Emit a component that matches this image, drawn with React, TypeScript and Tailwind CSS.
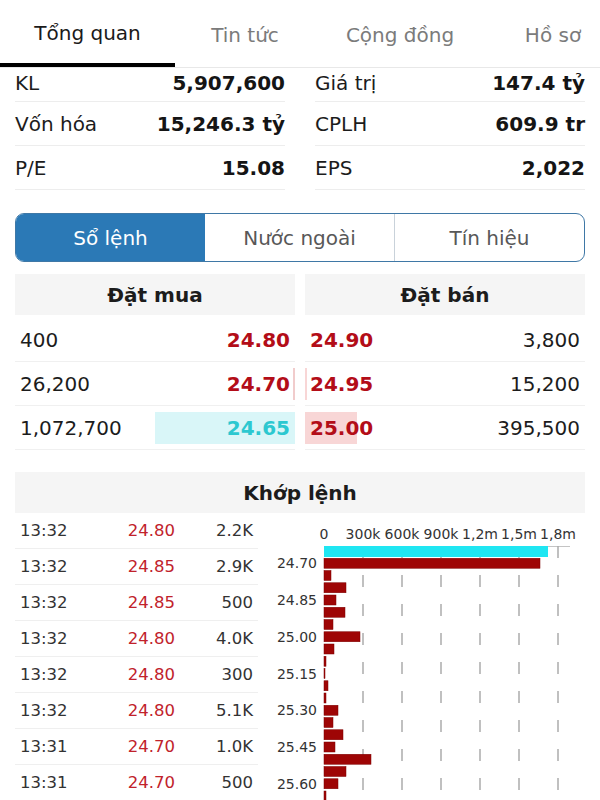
import React from 'react';

const tabs = [
    { label: 'Tổng quan', w: 'w-[175px]', active: true },
    { label: 'Tin tức', w: 'w-[140px]', active: false },
    { label: 'Cộng đồng', w: 'w-[170px]', active: false },
    { label: 'Hồ sơ', w: 'w-[136px]', active: false },
];

const stats = [
    { h: 'h-[34px] pb-[4px]', cells: [['KL', '5,907,600'], ['Giá trị', '147.4 tỷ']] },
    { h: 'h-[44px]', cells: [['Vốn hóa', '15,246.3 tỷ'], ['CPLH', '609.9 tr']] },
    { h: 'h-[44px]', cells: [['P/E', '15.08'], ['EPS', '2,022']] },
];

const bids = [
    { qty: '400', price: '24.80', bar: 0, hl: false },
    { qty: '26,200', price: '24.70', bar: 2, hl: false },
    { qty: '1,072,700', price: '24.65', bar: 140, hl: true },
];

const asks = [
    { qty: '3,800', price: '24.90', bar: 0 },
    { qty: '15,200', price: '24.95', bar: 2 },
    { qty: '395,500', price: '25.00', bar: 52 },
];

const trades = [
    ['13:32', '24.80', '2.2K'],
    ['13:32', '24.85', '2.9K'],
    ['13:32', '24.85', '500'],
    ['13:32', '24.80', '4.0K'],
    ['13:32', '24.80', '300'],
    ['13:32', '24.80', '5.1K'],
    ['13:31', '24.70', '1.0K'],
    ['13:31', '24.70', '500'],
];

// bar lengths in px, measured from zero line
const volumes = [
    224, 216, 7, 22, 12, 21, 9, 36, 10, 2, 1, 4, 2, 14, 9, 19, 11, 47, 22, 14, 2,
];
const priceLabels: Record<number, string> = {
    1: '24.70',
    4: '24.85',
    7: '25.00',
    10: '25.15',
    13: '25.30',
    16: '25.45',
    19: '25.60',
};
const axisLabels = ['0', '300k', '600k', '900k', '1,2m', '1,5m', '1,8m'];

const ZERO = 66;
const STEP = 39;
const TOP = 33;
const PITCH = 12.25;

const VolumeChart = () => {
    const dashes: number[] = [];
    for (let y = TOP; y < 287; y += 29) dashes.push(y);

    return (
        <svg width={342} height={287} className="block shrink-0">
            {axisLabels.map((l, i) => (
                <text
                    key={l}
                    x={ZERO + STEP * i}
                    y={26}
                    textAnchor="middle"
                    fontSize={14}
                    fill="#333"
                >
                    {l}
                </text>
            ))}
            <line x1={ZERO} x2={312} y1={TOP + 0.5} y2={TOP + 0.5} stroke="#c4c4c4" />
            {[1, 2, 3, 4, 5, 6].map((k) =>
                dashes.map((y) => (
                    <line
                        key={`${k}-${y}`}
                        x1={ZERO + STEP * k}
                        x2={ZERO + STEP * k}
                        y1={y}
                        y2={y + 12}
                        stroke="#ababab"
                        strokeWidth={1.5}
                    />
                )),
            )}
            {volumes.map((v, i) => (
                <rect
                    key={i}
                    x={ZERO}
                    y={TOP + i * PITCH}
                    width={v}
                    height={i === 0 ? 11 : 10}
                    fill={i === 0 ? '#1fe6f2' : '#9e0505'}
                    stroke={i === 0 ? 'none' : '#7c0000'}
                    strokeWidth={0.5}
                />
            ))}
            {Object.entries(priceLabels).map(([i, l]) => (
                <text
                    key={l}
                    x={59}
                    y={TOP + Number(i) * PITCH + 10}
                    textAnchor="end"
                    fontSize={14}
                    fill="#333"
                >
                    {l}
                </text>
            ))}
        </svg>
    );
};

export default function App() {
    return (
        <div
            className="w-[600px] h-[800px] overflow-hidden bg-white text-[#1c1c1c]"
            style={{ fontFamily: '"DejaVu Sans", sans-serif' }}
        >
            {/* top tabs */}
            <div className="flex h-[68px] overflow-hidden border-b border-[#e8e8e8]">
                {tabs.map((t) => (
                    <div
                        key={t.label}
                        className={`${t.w} shrink-0 flex items-center justify-center pt-[3px] text-[20px] ${
                            t.active
                                ? 'border-b-4 border-black text-[#1a1a1a]'
                                : 'text-[#7b7b7b]'
                        }`}
                    >
                        {t.label}
                    </div>
                ))}
            </div>

            {/* stats */}
            <div className="px-[15px]">
                {stats.map((row, r) => (
                    <div key={r} className="grid grid-cols-2 gap-x-[30px]">
                        {row.cells.map(([label, value]) => (
                            <div
                                key={label}
                                className={`${row.h} flex items-center justify-between border-b border-[#ededed] text-[20px]`}
                            >
                                <span>{label}</span>
                                <span className="font-bold text-[#151515]">{value}</span>
                            </div>
                        ))}
                    </div>
                ))}
            </div>

            {/* segmented control */}
            <div className="mx-[15px] mt-[23px] flex h-[49px] overflow-hidden rounded-[9px] border border-[#3f78a6] text-[20px]">
                <div className="flex flex-1 items-center justify-center bg-[#2b79b6] text-white">
                    Sổ lệnh
                </div>
                <div className="flex flex-1 items-center justify-center border-r border-[#c9d2da] text-[#585858]">
                    Nước ngoài
                </div>
                <div className="flex flex-1 items-center justify-center text-[#585858]">
                    Tín hiệu
                </div>
            </div>

            {/* order book */}
            <div className="mx-[15px] mt-[12px] grid grid-cols-2 gap-x-[10px]">
                <div>
                    <div className="flex h-[41px] items-center justify-center bg-[#f5f5f5] text-[20px] font-bold">
                        Đặt mua
                    </div>
                    <div className="mt-[3px]">
                        {bids.map((b) => (
                            <div
                                key={b.price}
                                className="relative flex h-[44px] items-center justify-between border-b border-[#f0f0f0] px-[5px] text-[20px]"
                            >
                                {b.bar > 0 && (
                                    <div
                                        className={`absolute right-0 top-[6px] h-[32px] ${
                                            b.hl ? 'bg-[#d9f6f8]' : 'bg-[#f1cccc]'
                                        }`}
                                        style={{ width: b.bar }}
                                    />
                                )}
                                <span className="relative">{b.qty}</span>
                                <span
                                    className={`relative font-bold ${
                                        b.hl ? 'text-[#2cc8d0]' : 'text-[#b30d18]'
                                    }`}
                                >
                                    {b.price}
                                </span>
                            </div>
                        ))}
                    </div>
                </div>
                <div>
                    <div className="flex h-[41px] items-center justify-center bg-[#f5f5f5] text-[20px] font-bold">
                        Đặt bán
                    </div>
                    <div className="mt-[3px]">
                        {asks.map((a) => (
                            <div
                                key={a.price}
                                className="relative flex h-[44px] items-center justify-between border-b border-[#f0f0f0] px-[5px] text-[20px]"
                            >
                                {a.bar > 0 && (
                                    <div
                                        className="absolute left-0 top-[6px] h-[32px] bg-[#f8d6d6]"
                                        style={{ width: a.bar }}
                                    />
                                )}
                                <span className="relative font-bold text-[#b30d18]">
                                    {a.price}
                                </span>
                                <span className="relative">{a.qty}</span>
                            </div>
                        ))}
                    </div>
                </div>
            </div>

            {/* matched orders */}
            <div className="mx-[15px] mt-[22px] flex h-[41px] items-center justify-center bg-[#f5f5f5] text-[20px] font-bold">
                Khớp lệnh
            </div>
            <div className="flex pl-[15px]">
                <div className="w-[243px] shrink-0">
                    {trades.map(([time, price, vol], i) => (
                        <div
                            key={i}
                            className="grid h-[36px] grid-cols-[85px_70px_78px] items-center border-b border-[#efefef] px-[5px] pt-[2px] text-[16.5px]"
                        >
                            <span className="text-[#333]">{time}</span>
                            <span className="text-right text-[#c1222b]">{price}</span>
                            <span className="text-right text-[#333]">{vol}</span>
                        </div>
                    ))}
                </div>
                <VolumeChart />
            </div>
        </div>
    );
}
